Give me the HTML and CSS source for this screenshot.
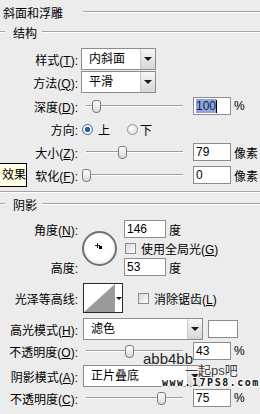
FILE: index.html
```html
<!DOCTYPE html>
<html lang="zh-CN">
<head>
  <meta charset="UTF-8" />
  <title>图层样式 – 斜面和浮雕</title>
  <link rel="stylesheet" href="styles.css">
</head>
<body>

  <!-- Kopf -->
  <div class="legend legend-main">斜面和浮雕</div>

  <!-- Struktur -->
  <div class="legend legend-sub">结构</div>
  <div class="struct">
    <div class="row row-select">
      <span class="lbl">样式(<u>T</u>):</span>
      <div class="select select-short"><span class="val">内斜面</span><span class="arr"></span></div>
    </div>
    <div class="row row-select row-tight">
      <span class="lbl">方法(<u>Q</u>):</span>
      <div class="select select-short"><span class="val">平滑</span><span class="arr"></span></div>
    </div>
    <div class="row row-field row-depth">
      <span class="lbl">深度(<u>D</u>):</span>
      <div class="slider"><span class="thumb" style="left:6px"></span></div>
      <div class="num"><span class="sel">100</span><span class="caret"></span></div>
      <span class="unit">%</span>
    </div>
    <div class="row row-field row-gap">
      <span class="lbl">方向:</span>
      <span class="radio on"></span><span class="opt">上</span>
      <span class="radio radio-second"></span><span class="opt opt-second">下</span>
    </div>
    <div class="row row-field row-gap">
      <span class="lbl">大小(<u>Z</u>):</span>
      <div class="slider"><span class="thumb" style="left:32px"></span></div>
      <div class="num">79</div>
      <span class="unit">像素</span>
    </div>
    <div class="row row-field row-gap">
      <span class="lbl">软化(<u>F</u>):</span>
      <div class="slider"><span class="thumb" style="left:-4px"></span></div>
      <div class="num">0</div>
      <span class="unit">像素</span>
    </div>
  </div>

  <div class="sep"></div>

  <!-- Schatten -->
  <div class="legend legend-sub legend-shade">阴影</div>
  <div class="shade">
    <span class="lbl lbl-angle">角度(<u>N</u>):</span>
    <div class="dial"><span class="cross"></span><span class="dot"></span></div>
    <div class="cell cell-angle"><div class="num num-deg">146</div><span class="unit">度</span></div>
    <div class="cell cell-global"><span class="check"></span><span class="opt">使用全局光(<u>G</u>)</span></div>
    <span class="lbl lbl-height">高度:</span>
    <div class="cell cell-height"><div class="num num-deg">53</div><span class="unit">度</span></div>
  </div>

  <div class="row row-contour">
    <span class="lbl">光泽等高线:</span>
    <div class="contour">
      <svg width="31" height="28" viewBox="0 0 31 28">
        <polygon points="0,28 31,0 31,28" fill="#9a9a9a"/>
      </svg>
      <span class="contour-arr"></span>
    </div>
    <span class="check check-aa"></span><span class="opt">消除锯齿(<u>L</u>)</span>
  </div>

  <div class="row row-select row-hl">
    <span class="lbl">高光模式(<u>H</u>):</span>
    <div class="select select-long"><span class="val">滤色</span><span class="arr"></span></div>
    <span class="swatch"></span>
  </div>
  <div class="row row-field row-op">
    <span class="lbl">不透明度(<u>O</u>):</span>
    <div class="slider"><span class="thumb" style="left:39px"></span></div>
    <div class="num">43</div>
    <span class="unit">%</span>
  </div>
  <div class="row row-select row-hl">
    <span class="lbl">阴影模式(<u>A</u>):</span>
    <div class="select select-long"><span class="val">正片叠底</span><span class="arr"></span></div>
  </div>
  <div class="row row-field row-op">
    <span class="lbl">不透明度(<u>C</u>):</span>
    <div class="slider"><span class="thumb" style="left:71px"></span></div>
    <div class="num">75</div>
    <span class="unit">%</span>
  </div>

  <!-- Tooltip + Wasserzeichen liegen oben drauf -->
  <div class="tip">效果</div>
  <div class="wm wm-name">abb4bb</div>
  <div class="wm wm-cn">一起ps吧</div>
  <div class="wm wm-url">www.17PS8.com</div>

</body>
</html>
```

FILE: styles.css
```css
html, body {
  margin: 0;
  padding: 0;
}

body {
  position: relative;
  width: 260px;
  height: 414px;
  overflow: hidden;
  background: #ececec;
  color: #000;
  font-family: "Liberation Sans", "Noto Sans CJK SC", sans-serif;
  font-size: 12px;
}

u {
  text-decoration: underline;
  text-underline-offset: 1px;
}

/* Gruppentitel mit Linie */
.legend {
  display: flex;
  align-items: center;
  height: 24px;
  white-space: nowrap;
}

.legend::after {
  content: "";
  flex: 1;
  border-top: 1px solid #a2a2a2;
  border-bottom: 1px solid #fff;
}

.legend-main {
  padding-left: 3px;
}

.legend-main::after {
  margin-left: 20px;
}

.legend-sub {
  height: 16px;
}

.legend-sub::before {
  content: "";
  width: 5px;
  margin-right: 8px;
  border-top: 1px solid #a2a2a2;
  border-bottom: 1px solid #fff;
}

.legend-sub::after {
  margin-left: 5px;
}

.legend-shade {
  margin-top: 3px;
}

.sep {
  margin-top: 7px;
  border-top: 1px solid #a2a2a2;
  border-bottom: 1px solid #fff;
}

/* Zeilen */
.struct {
  padding-top: 8px;
}

.row {
  display: flex;
  align-items: center;
  white-space: nowrap;
}

.row-select {
  height: 22px;
}

.row-tight {
  margin-top: 1px;
}

.row-field {
  height: 18px;
}

.row-depth {
  margin-top: 4px;
}

.row-gap {
  margin-top: 5px;
}

.lbl {
  flex: none;
  width: 78px;
  text-align: right;
}

/* Dropdown */
.select {
  display: flex;
  height: 22px;
  box-sizing: border-box;
  border: 1px solid #8d8d8d;
  background: #fff;
}

.select-short {
  width: 75px;
  margin-left: 3px;
}

.select-long {
  width: 120px;
  margin-left: 5px;
}

.select .val {
  flex: 1;
  padding-left: 7px;
  line-height: 20px;
}

.select .arr {
  display: flex;
  align-items: center;
  justify-content: center;
  width: 14px;
  border-left: 1px solid #c9c9c9;
  background: linear-gradient(#f6f6f6, #d6d6d6);
}

.select .arr::after {
  content: "";
  border-left: 4px solid transparent;
  border-right: 4px solid transparent;
  border-top: 4px solid #1a1a1a;
}

/* Schieberegler */
.slider {
  position: relative;
  flex: none;
  width: 97px;
  height: 18px;
  margin: 0 10px 0 8px;
}

.slider::before {
  content: "";
  position: absolute;
  left: 0;
  right: 0;
  top: 8px;
  border-top: 1px solid #9c9c9c;
  border-bottom: 1px solid #fff;
}

.thumb {
  position: absolute;
  top: 3px;
  width: 7px;
  height: 11px;
  border: 1px solid #7a7a7a;
  border-radius: 3px 3px 4px 4px;
  background: linear-gradient(#ffffff, #d9d9d9);
}

/* Eingabefelder */
.num {
  display: flex;
  align-items: center;
  flex: none;
  width: 38px;
  height: 18px;
  box-sizing: border-box;
  padding-left: 2px;
  border: 1px solid #8d8d8d;
  background: #fff;
}

.num .sel {
  background: #8ea6d8;
  color: #13235a;
}

.caret {
  width: 1px;
  height: 13px;
  background: #000;
}

.num-deg {
  width: 42px;
}

.unit {
  margin-left: 3px;
}

/* Optionsfelder */
.radio {
  flex: none;
  width: 11px;
  height: 11px;
  margin-left: 4px;
  box-sizing: border-box;
  border: 1px solid #8b949e;
  border-radius: 50%;
  background: radial-gradient(circle at 40% 40%, #ffffff, #d4d4d4);
}

.radio.on {
  border-color: #4a6483;
  background: radial-gradient(circle, #2d5fa8 0 2.5px, #ffffff 3px, #c9d3df 100%);
}

.radio-second {
  margin-left: 17px;
}

.opt {
  margin-left: 5px;
}

.opt-second {
  margin-left: 2px;
}

.check {
  flex: none;
  width: 11px;
  height: 11px;
  box-sizing: border-box;
  border: 1px solid #8c8c8c;
  background: linear-gradient(135deg, #d6d6d6, #ffffff);
}

/* Winkel-Bereich */
.shade {
  display: grid;
  grid-template-columns: 78px 46px auto;
  grid-template-rows: 18px 18px 18px;
  row-gap: 1px;
  align-items: center;
  margin-top: 8px;
}

.lbl-angle {
  grid-column: 1;
  grid-row: 1;
}

.lbl-height {
  grid-column: 1;
  grid-row: 3;
}

.dial {
  position: relative;
  grid-column: 2;
  grid-row: 1 / 4;
  width: 35px;
  height: 35px;
  margin-left: 4px;
  box-sizing: border-box;
  border: 2px solid #6b727c;
  border-radius: 50%;
  background: radial-gradient(circle at 50% 45%, #ffffff 55%, #d3d3d3 100%);
}

.cross {
  position: absolute;
  left: 11px;
  top: 10px;
  width: 5px;
  height: 5px;
  background:
    linear-gradient(#222, #222) center / 5px 1px no-repeat,
    linear-gradient(#222, #222) center / 1px 5px no-repeat;
}

.dot {
  position: absolute;
  left: 15px;
  top: 13px;
  width: 3px;
  height: 3px;
  background: #000;
}

.cell {
  display: flex;
  align-items: center;
  white-space: nowrap;
}

.cell-angle {
  grid-column: 3;
  grid-row: 1;
}

.cell-global {
  grid-column: 3;
  grid-row: 2;
}

.cell-global .check {
  margin-left: 1px;
}

.cell-height {
  grid-column: 3;
  grid-row: 3;
}

/* Glanzkontur */
.row-contour {
  height: 30px;
  margin-top: 7px;
}

.contour {
  display: flex;
  flex: none;
  width: 40px;
  height: 30px;
  margin-left: 5px;
  box-sizing: border-box;
  border: 1px solid #2a2a2a;
  background: #fff;
}

.contour svg {
  display: block;
}

.contour-arr {
  display: flex;
  align-items: center;
  justify-content: center;
  flex: 1;
}

.contour-arr::after {
  content: "";
  border-left: 3px solid transparent;
  border-right: 3px solid transparent;
  border-top: 3px solid #111;
}

.check-aa {
  margin-left: 15px;
}

/* Modus-Zeilen */
.row-hl {
  margin-top: 5px;
}

.row-op {
  margin-top: 2px;
}

.swatch {
  width: 30px;
  height: 18px;
  margin-left: 5px;
  box-sizing: border-box;
  border: 1px solid #8a8a8a;
  background: #fff;
}

/* Overlays */
.tip {
  position: absolute;
  left: 0;
  top: 163px;
  width: 27px;
  height: 24px;
  box-sizing: border-box;
  border: 1px solid #000;
  border-left: 0;
  background: #ffffe1;
  font-size: 12px;
  line-height: 22px;
  text-align: right;
}

.wm {
  position: absolute;
  white-space: nowrap;
}

.wm-name {
  left: 143px;
  top: 351px;
  font-size: 15px;
  line-height: 15px;
  color: #262626;
}

.wm-cn {
  left: 185px;
  top: 364px;
  font-size: 13px;
  line-height: 14px;
  color: #3c3c3c;
  text-shadow: 0 0 2px #fff, 0 0 2px #fff;
}

.wm-url {
  left: 162px;
  top: 378px;
  font-family: "DejaVu Sans Mono", monospace;
  font-size: 10px;
  font-weight: bold;
  letter-spacing: 1.5px;
  line-height: 10px;
  color: #111;
  text-shadow: 1px 1px 0 #fff, -1px -1px 0 #fff, 1px -1px 0 #fff, -1px 1px 0 #fff;
}
```
